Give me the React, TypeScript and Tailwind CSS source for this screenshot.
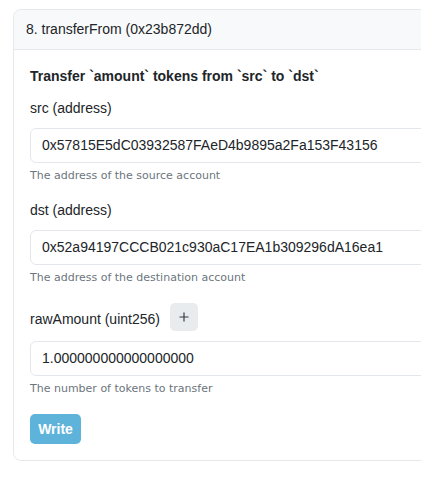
import { Plus } from 'lucide-react';

function Field({ label, value, hint, plus }: { label: string; value: string; hint: string; plus?: boolean }) {
  return (
    <div>
      {plus ? (
        <div className="flex items-center gap-[10px] h-[28px]">
          <span className="text-[14px] leading-[20px] text-[#212529] mt-[3px]">{label}</span>
          <button className="w-[28px] h-[28px] flex items-center justify-center rounded-[5px] bg-[#e9ecef] text-[#343a40]">
            <Plus size={14} strokeWidth={2} />
          </button>
        </div>
      ) : (
        <div className="text-[14px] leading-[20px] text-[#212529]">{label}</div>
      )}
      <div className="mt-[10px] h-[35px] flex items-center pl-[11px] border border-[#e3e6ea] rounded-[6px] text-[14px] text-[#212529] whitespace-nowrap">
        {value}
      </div>
      <div
        className="mt-[5px] text-[11px] leading-[16px] text-[#6c757d]"
        style={{ fontFamily: '"DejaVu Sans", Verdana, sans-serif' }}
      >
        {hint}
      </div>
    </div>
  );
}

export default function App() {
  return (
    <div className="w-[444px] h-[478px] bg-white" style={{ fontFamily: '"Liberation Sans", Arial, sans-serif' }}>
      <div className="w-[421px] overflow-hidden pt-[9px] pl-[13px]">
        <div className="w-[460px] border border-[#e6e8eb] rounded-[8px] overflow-hidden">
          <div className="h-[40px] flex items-center px-[12px] bg-[#f8f9fa] border-b border-[#e6e8eb] text-[14px] text-[#212529]">
            8. transferFrom (0x23b872dd)
          </div>
          <div className="pt-[16px] pl-[16px] pb-[16px]">
            <div className="text-[14px] leading-[20px] font-bold text-[#212529]">
              Transfer `amount` tokens from `src` to `dst`
            </div>
            <div className="mt-[12px]">
              <Field label="src (address)" value="0x57815E5dC03932587FAeD4b9895a2Fa153F43156" hint="The address of the source account" />
            </div>
            <div className="mt-[16px]">
              <Field label="dst (address)" value="0x52a94197CCCB021c930aC17EA1b309296dA16ea1" hint="The address of the destination account" />
            </div>
            <div className="mt-[17px]">
              <Field label="rawAmount (uint256)" value="1.000000000000000000" hint="The number of tokens to transfer" plus />
            </div>
            <button className="mt-[17px] h-[30px] w-[51px] rounded-[5px] bg-[#5eb3db] text-white font-bold text-[14px]">
              Write
            </button>
          </div>
        </div>
      </div>
    </div>
  );
}
